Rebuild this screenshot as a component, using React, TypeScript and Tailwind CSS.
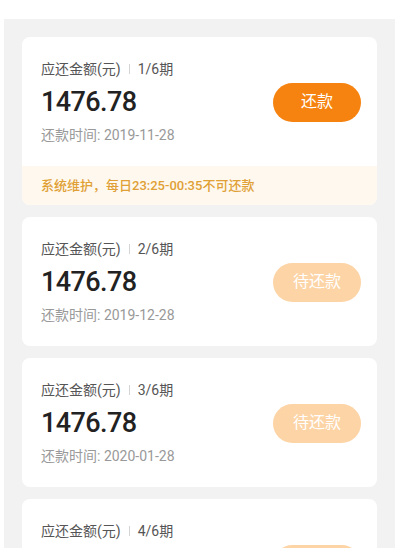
import React from "react";

type Item = { period: string; date: string; active: boolean; notice?: boolean };

const items: Item[] = [
  { period: "1/6期", date: "2019-11-28", active: true, notice: true },
  { period: "2/6期", date: "2019-12-28", active: false },
  { period: "3/6期", date: "2020-01-28", active: false },
  { period: "4/6期", date: "2020-02-28", active: false },
];

function Card({ item }: { item: Item }) {
  return (
    <div className="bg-white rounded-[8px] overflow-hidden shrink-0">
      <div className="flex items-center justify-between pl-[19px] pr-4 pt-[22px] pb-[21px]">
        <div className="flex flex-col">
          <div className="flex items-center h-5 leading-5 text-[14px] text-[#555]">
            <span>应还金额(元)</span>
            <span className="mx-[8px] w-px h-[10px] bg-[#d5d5d5]" />
            <span>{item.period}</span>
          </div>
          <div className="mt-[6px] leading-[34px] text-[27px] font-medium text-[#222] tracking-[-0.6px]">
            1476.78
          </div>
          <div className="mt-[6px] h-5 leading-5 text-[14px] text-[#999]">
            还款时间: {item.date}
          </div>
        </div>
        <div
          className={
            item.active
              ? "w-[88px] h-[39px] rounded-full bg-[#f6830f] text-white text-[16px] flex items-center justify-center"
              : "w-[88px] h-[39px] rounded-full bg-[#fdd4a6] text-white text-[16px] flex items-center justify-center"
          }
        >
          {item.active ? "还款" : "待还款"}
        </div>
      </div>
      {item.notice && (
        <div className="h-[39px] bg-[#fff8ee] pl-[19px] flex items-center text-[13px] font-medium text-[#e0a035]">
          系统维护，每日23:25-00:35不可还款
        </div>
      )}
    </div>
  );
}

export default function App() {
  return (
    <div
      className="w-[400px] h-[548px] bg-white overflow-hidden pt-[19px] pl-[4px] pr-[5px]"
      style={{ fontFamily: 'Roboto, "Noto Sans CJK SC", sans-serif' }}
    >
      <div className="bg-[#f2f2f2] h-full px-[18px] pt-[18px] flex flex-col gap-[12px] overflow-hidden">
        {items.map((it) => (
          <Card key={it.period} item={it} />
        ))}
      </div>
    </div>
  );
}
